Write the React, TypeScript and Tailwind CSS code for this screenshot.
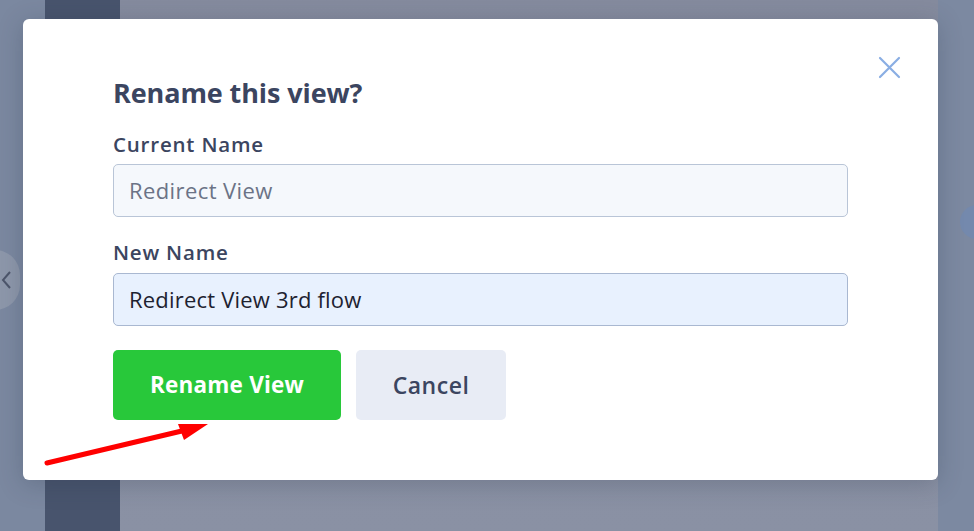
import React from "react";

export default function App() {
  return (
    <div className="relative h-[531px] w-full overflow-hidden bg-[#888fa2]" style={{ fontFamily: "'Open Sans', Lato, sans-serif" }}>
      {/* backdrop content */}
      <div className="flex h-full w-full">
        <div className="relative h-full w-[45px] bg-[#7b88a0]">
          <div className="absolute left-[-30px] top-[250px] flex h-[60px] w-[50px] items-center justify-end rounded-full bg-[#8d97aa] pr-[8px] text-[#4d566b]">
            <svg width="12" height="20" viewBox="0 0 12 20"><path d="M10 2 L3 10 L10 18" fill="none" stroke="currentColor" strokeWidth="2" /></svg>
          </div>
        </div>
        <div className="h-full w-[75px] bg-[#48546d]" />
        <div className="h-full flex-1 bg-gradient-to-b from-[#858b9e] to-[#8a91a4]" />
        <div className="relative h-full w-[36px] bg-[#7c89a1]">
          <div className="absolute left-[22px] top-[205px] h-[34px] w-[34px] rounded-full bg-[#7489ad]" />
        </div>
      </div>

      {/* modal */}
      <div className="absolute left-[23px] top-[19px] h-[461px] w-[915px] rounded-[6px] bg-white shadow-[0_4px_24px_rgba(40,50,70,0.25)]">
        <button className="absolute right-[37px] top-[37px] text-[#8aaee3]">
          <svg width="23" height="23" viewBox="0 0 23 23"><path d="M2 2 L21 21 M21 2 L2 21" stroke="currentColor" strokeWidth="2.2" strokeLinecap="round" /></svg>
        </button>
        <div className="flex flex-col pl-[90px] pr-[90px] pt-[56px]">
          <h2 className="h-[36px] text-[27px] font-bold leading-[36px] tracking-[-0.1px] text-[#3b4560]">Rename this view?</h2>
          <label className="mt-[20px] h-[26px] text-[20.5px] font-semibold leading-[26px] tracking-[0.8px] text-[#3b4560]">Current Name</label>
          <div className="mt-[7px] flex h-[53px] items-center rounded-[5px] border border-[#b9c5d7] bg-[#f5f8fc] px-[15px] text-[22px] tracking-[0.4px] text-[#6b7386]">
            Redirect View
          </div>
          <label className="mt-[22px] h-[26px] text-[20.5px] font-semibold leading-[26px] tracking-[0.8px] text-[#3b4560]">New Name</label>
          <div className="mt-[8px] flex h-[53px] items-center rounded-[5px] border border-[#a9b8d1] bg-[#e8f1fe] px-[15px] text-[22px] tracking-[0.2px] text-[#1d2230]">
            Redirect View 3rd flow
          </div>
          <div className="mt-[24px] flex gap-[15px]">
            <button className="h-[70px] w-[228px] rounded-[5px] bg-[#28c83a] text-[22.5px] font-bold tracking-[0.2px] text-white">Rename View</button>
            <button className="h-[70px] w-[150px] rounded-[5px] bg-[#e8ecf5] text-[23px] font-semibold tracking-[0.5px] text-[#3b4560]">Cancel</button>
          </div>
        </div>
      </div>

      {/* annotation arrow */}
      <svg className="absolute left-0 top-0" width="974" height="531" viewBox="0 0 974 531">
        <line x1="47" y1="463" x2="186" y2="430" stroke="#ff0000" strokeWidth="5" strokeLinecap="round" />
        <polygon points="208,424 178,424 184,440" fill="#ff0000" />
      </svg>
    </div>
  );
}
